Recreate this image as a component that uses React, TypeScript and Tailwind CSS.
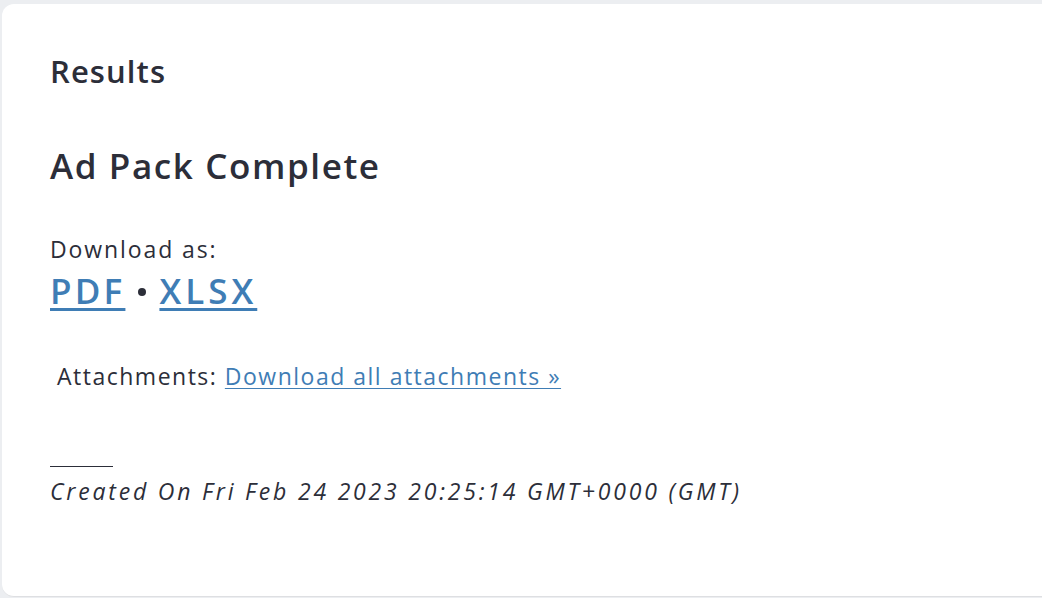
import React from "react";

export default function App() {
  return (
    <div
      className="h-[598px] w-[1042px] bg-[#eceef1] pt-[4px] pl-[2px] pb-[1px] overflow-hidden"
      style={{ fontFamily: "'Open Sans', sans-serif" }}
    >
      <div className="h-full bg-white rounded-l-[12px] border-b border-[#dedfe2] pl-[48px] pt-[49px] text-[#2c2e39] flex flex-col items-start">
        <h2 className="text-[31px] leading-[36px] font-semibold tracking-[1.1px]">Results</h2>
        <h1 className="mt-[57px] text-[35px] leading-[40px] font-semibold tracking-[1.6px]">Ad Pack Complete</h1>
        <div className="mt-[50px] text-[23px] leading-[26px] tracking-[1.9px]">Download as:</div>
        <div className="mt-[9px] text-[35px] leading-[40px] font-semibold flex items-center">
          <a href="#" className="text-[#3f7db5] underline decoration-[3px] underline-offset-[4px] tracking-[3.2px]">PDF</a>
          <span className="ml-[13px] mr-[13px] mt-[2px] inline-block h-[8px] w-[8px] rounded-full bg-[#2c2e39]" />
          <a href="#" className="text-[#3f7db5] underline decoration-[3px] underline-offset-[4px] tracking-[4px]">XLSX</a>
        </div>
        <div className="mt-[52px] text-[23px] leading-[26px] pl-[7px] tracking-[1.5px]">
          Attachments:{" "}
          <a href="#" className="text-[#3f7db5] underline decoration-1 underline-offset-[3px]">
            Download all attachments »
          </a>
        </div>
        <div className="mt-[77px] h-px w-[63px] bg-[#2c2e39]" />
        <div className="mt-[11px] text-[23px] leading-[26px] italic tracking-[2.8px]">
          Created On Fri Feb 24 2023 20:25:14 GMT+0000 (GMT)
        </div>
      </div>
    </div>
  );
}
